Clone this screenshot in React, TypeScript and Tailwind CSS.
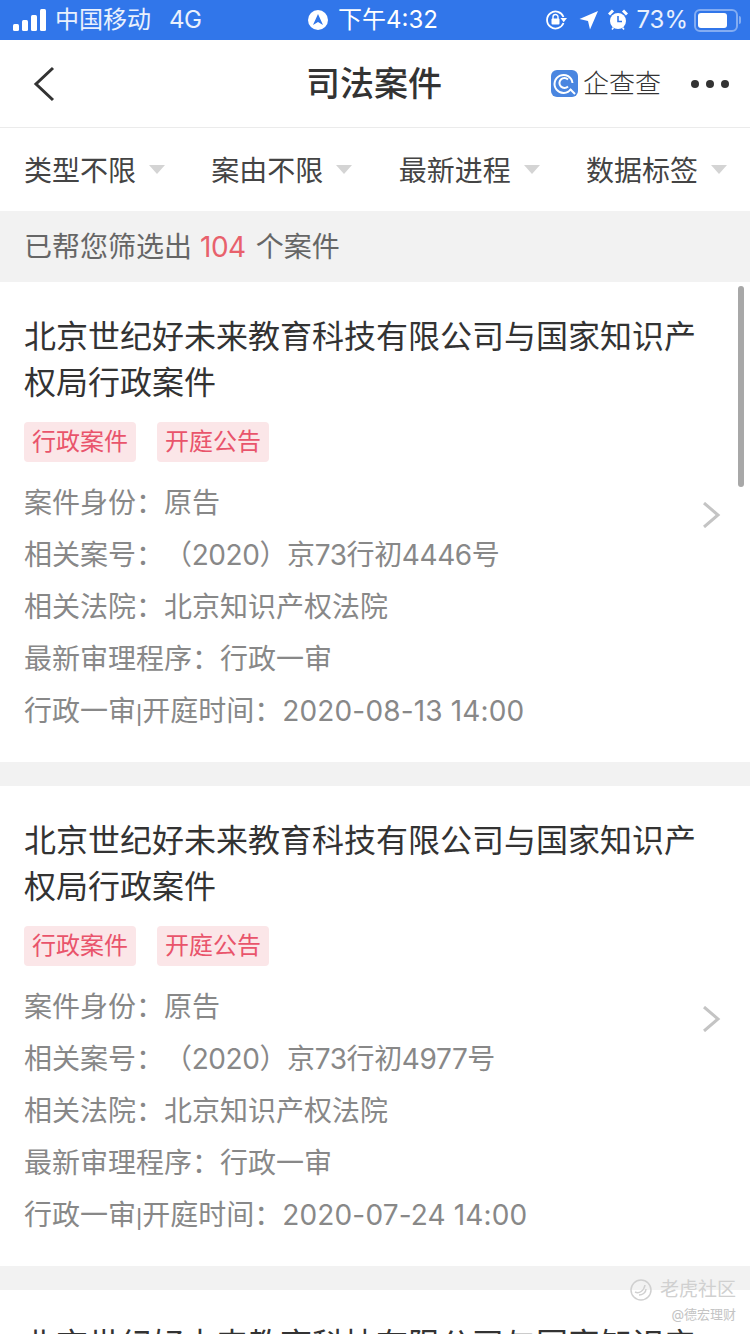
import type { ReactNode } from "react";

const filters = ["类型不限", "案由不限", "最新进程", "数据标签"];

const cases = [
  { caseNo: "（2020）京73行初4446号", date: "2020-08-13 14:00" },
  { caseNo: "（2020）京73行初4977号", date: "2020-07-24 14:00" },
  { caseNo: "（2020）京73行初4977号", date: "2020-07-24 14:00" },
];

const title = "北京世纪好未来教育科技有限公司与国家知识产权局行政案件";

function StatusBar() {
  return (
    <div className="flex h-10 items-center bg-[#3176ea] pl-[13px] pr-[9px] text-white">
      <div className="flex w-[295px] items-center">
        <svg width="34" height="22" viewBox="0 0 34 22" fill="#fff">
          <rect x="0" y="15" width="6" height="7" rx="1.5" />
          <rect x="9" y="11" width="6" height="11" rx="1.5" />
          <rect x="18" y="6" width="6" height="16" rx="1.5" />
          <rect x="27" y="0" width="6" height="22" rx="1.5" />
        </svg>
        <span className="ml-2 text-[24px] leading-none text-white/90">中国移动</span>
        <span className="ml-[18px] text-[24px] leading-none tracking-[-0.5px] text-white/90">4G</span>
      </div>
      <div className="flex items-center">
        <svg width="20" height="20" viewBox="0 0 20 20">
          <circle cx="10" cy="10" r="10" fill="#fff" />
          <path d="M10 4 L15 15 L10 12 L5 15 Z" fill="#3176ea" />
        </svg>
        <span className="ml-[10px] text-[24px] leading-none">下午4:32</span>
      </div>
      <div className="ml-auto flex items-center">
        <svg width="22" height="22" viewBox="0 0 22 22" fill="none">
          <path d="M18.5 8 A8.5 8.5 0 1 0 18.5 14" stroke="#fff" strokeWidth="1.8" />
          <path d="M15.5 9 L22 9 L18.7 13.2 Z" fill="#fff" />
          <rect x="6.5" y="9.5" width="8" height="6" rx="1" fill="#fff" />
          <path d="M8 10 V8 a2.5 2.5 0 0 1 5 0 V10" stroke="#fff" strokeWidth="1.4" />
        </svg>
        <svg className="ml-3" width="20" height="20" viewBox="0 0 20 20">
          <path d="M19 1 L11 19.5 L9 11 L0.5 9 Z" fill="#fff" />
        </svg>
        <svg className="ml-[9px]" width="20" height="22" viewBox="0 0 20 22" fill="none">
          <circle cx="10" cy="12" r="8" fill="#fff" />
          <path d="M10 7 V12.5 H14" stroke="#3176ea" strokeWidth="1.6" />
          <path d="M1 5.5 L5 1.5 M19 5.5 L15 1.5" stroke="#fff" strokeWidth="3" />
          <path d="M4 20.5 L5.5 18.5 M16 20.5 L14.5 18.5" stroke="#fff" strokeWidth="1.5" />
        </svg>
        <span className="ml-[8px] text-[24px] leading-none text-white/90">73%</span>
        <div className="ml-[6px] flex h-[23px] w-[44px] items-center rounded-[6px] border-2 border-white/40 p-[2px]">
          <div className="h-full w-[29px] rounded-[3px] bg-white" />
        </div>
        <div className="ml-[1px] h-[8px] w-[2px] rounded-r-full bg-white/40" />
      </div>
    </div>
  );
}

function NavBar() {
  return (
    <div className="relative flex h-[88px] items-center border-b border-[#ebebeb] bg-white">
      <svg className="ml-[32px]" width="24" height="36" viewBox="0 0 24 36" fill="none">
        <path d="M21 2 L4 18 L21 34" stroke="#333" strokeWidth="3" />
      </svg>
      <span className="ml-[250px] w-[136px] text-[34px] font-medium leading-none text-[#333]">司法案件</span>
      <svg className="ml-[109px]" width="27" height="27" viewBox="0 0 27 27" fill="none">
        <rect width="27" height="27" rx="6" fill="#4a86e0" />
        <path d="M20 19 A9 9 0 1 1 21.5 13" stroke="#fff" strokeWidth="2" />
        <path d="M17 9.5 A5 5 0 1 0 17 16.5" stroke="#fff" strokeWidth="2" />
        <path d="M19 19 L24 24" stroke="#fff" strokeWidth="2" />
      </svg>
      <span className="ml-[5px] text-[26px] font-light leading-none text-[#333]">企查查</span>
      <div className="ml-[30px] flex gap-[7px]">
        <span className="size-[8px] rounded-full bg-[#333]" />
        <span className="size-[8px] rounded-full bg-[#333]" />
        <span className="size-[8px] rounded-full bg-[#333]" />
      </div>
    </div>
  );
}

function FilterBar() {
  return (
    <div className="flex h-[83px] items-center justify-between bg-white pl-[24px] pr-[23px] pt-[3px]">
      {filters.map((f) => (
        <div key={f} className="flex items-center">
          <span className="text-[28px] leading-none text-[#444]">{f}</span>
          <span className="ml-[13px] mb-[3px] h-0 w-0 border-x-[8px] border-t-[9px] border-x-transparent border-t-[#d4d4d4]" />
        </div>
      ))}
    </div>
  );
}

function CaseRow({ label, children }: { label: ReactNode; children: ReactNode }) {
  return (
    <p className="h-[52px] text-[28px] leading-[52px] text-[#888] [text-spacing-trim:space-all]">
      {label}：{children}
    </p>
  );
}

function CaseCard({ caseNo, date }: { caseNo: string; date: string }) {
  return (
    <div className="h-[480px] shrink-0 bg-white pl-[24px] pr-[30px] pt-[32px]">
      <h2 className="text-[32px] leading-[46px] text-[#333]">{title}</h2>
      <div className="mt-[16px] flex gap-[21px]">
        <span className="flex h-[40px] w-[112px] items-center justify-center rounded-[4px] bg-[#fbe6e8] text-[24px] leading-none text-[#e9546b]">
          行政案件
        </span>
        <span className="flex h-[40px] w-[112px] items-center justify-center rounded-[4px] bg-[#fbe6e8] text-[24px] leading-none text-[#e9546b]">
          开庭公告
        </span>
      </div>
      <div className="mt-[15px]">
        <CaseRow label="案件身份">原告</CaseRow>
        <CaseRow label="相关案号">
          <span className="tracking-[-0.4px]">{caseNo}</span>
        </CaseRow>
        <CaseRow label="相关法院">北京知识产权法院</CaseRow>
        <CaseRow label="最新审理程序">行政一审</CaseRow>
        <CaseRow
          label={
            <>
              行政一审<span className="font-['Liberation_Sans'] text-[24px]">|</span>开庭时间
            </>
          }
        >
          <span className="tracking-[0.15px]">{date}</span>
        </CaseRow>
      </div>
    </div>
  );
}

export default function App() {
  return (
    <div
      className="relative h-[1334px] w-[750px] overflow-hidden bg-[#f2f2f2]"
      style={{ fontFamily: 'Inter, "Noto Sans CJK SC", sans-serif' }}
    >
      <StatusBar />
      <NavBar />
      <FilterBar />
      <div className="flex h-[71px] items-center pl-[24px] text-[28px] leading-none text-[#666]">
        已帮您筛选出<span className="ml-[8px] mr-[10px] tracking-[-0.5px] text-[#e8616c]">104</span>个案件
      </div>
      <div className="flex flex-col gap-[24px]">
        {cases.map((c, i) => (
          <div key={i} className="relative">
            <CaseCard caseNo={c.caseNo} date={c.date} />
            <svg className="absolute left-[703px] top-[220px]" width="18" height="26" viewBox="0 0 18 26" fill="none">
              <path d="M1 1 L15 13 L1 25" stroke="#c4c4c4" strokeWidth="3" />
            </svg>
          </div>
        ))}
      </div>
      {/* scrollbar */}
      <div className="absolute left-[738px] top-[286px] h-[201px] w-[6px] rounded-full bg-[#a8a8a8]" />
      {/* watermark */}
      <div className="absolute right-[14px] top-[1279px] flex flex-col items-end text-white">
        <div className="flex items-center">
          <svg width="22" height="22" viewBox="0 0 22 22" fill="none">
            <circle cx="11" cy="11" r="10" stroke="#d0d0d0" strokeWidth="1.5" />
            <path d="M5 13 C9 15 14 12 15 6 M9 16 C12 16 16 14 16 10" stroke="#d0d0d0" strokeWidth="1.5" />
          </svg>
          <span className="ml-[8px] text-[19px] leading-[22px] text-[#d0d0d0]">老虎社区</span>
        </div>
        <span className="mt-[6px] text-[13px] leading-[14px] text-[#c4c4c4]">@德宏理财</span>
      </div>
    </div>
  );
}
